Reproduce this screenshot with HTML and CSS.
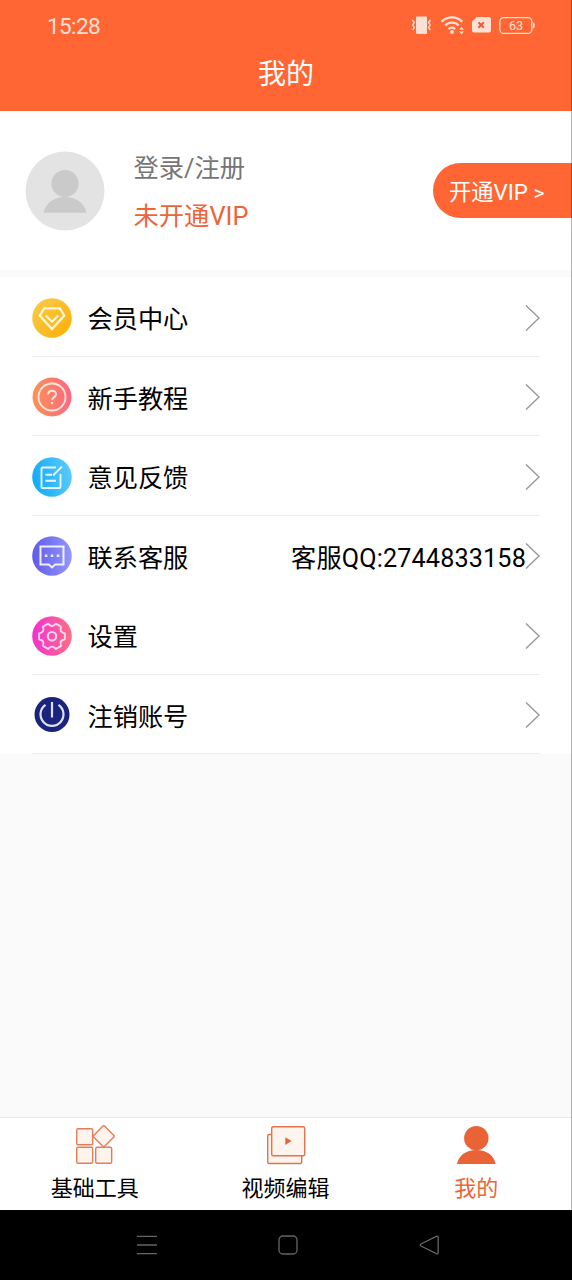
FILE: index.html
```html
<!DOCTYPE html>
<html lang="zh-CN">
<head>
<meta charset="utf-8">
<title>我的</title>
<link rel="stylesheet" href="styles.css">
</head>
<body>
<div class="app">
  <header class="header">
    <div class="status">
      <span class="time">15:28</span>
      <svg class="status-icons" width="126" height="24" viewBox="410 13 126 24" fill="#ffe0d4">
        <rect x="416" y="16.5" width="11" height="17.5" rx="1"/>
        <path d="M412.4 20l1.8 2.6-1.4 2.5 1.4 2.5-1.4 2.6M430.3 20l-1.6 2.6 1.4 2.5-1.4 2.5 1.6 2.6" fill="none" stroke="#ffe0d4" stroke-width="1.5"/>
        <path d="M441.6 21.6a14.5 14.5 0 0 1 20.6 0M445.3 25.5a9.4 9.4 0 0 1 13.4 0M448.6 29a4.8 4.8 0 0 1 6.6 0" fill="none" stroke="#ffe0d4" stroke-width="2.3"/>
        <circle cx="452" cy="32" r="1.9"/>
        <path d="M459.2 29.8l2.3-3 2.3 3zM459.2 31.4l2.3 3 2.3-3z"/>
        <path d="M476.5 17h12.5q2 0 2 2v11.5q0 2-2 2h-15q-2 0-2-2V21.500z"/>
        <path d="M478.400 22.300l5.400 5.400m0-5.400l-5.400 5.400" stroke="#e8603a" stroke-width="2"/>
        <rect x="499.800" y="17.600" width="32" height="15.800" rx="4" fill="none" stroke="#ffe0d4" stroke-width="1.300"/>
        <path d="M533 22.500q1.800 0 1.800 3t-1.800 3z"/>
        <text class="battery-level" x="516" y="30" text-anchor="middle">63</text>
      </svg>
    </div>
    <h1 class="title">我的</h1>
  </header>

  <section class="profile">
    <svg class="avatar" width="80" height="80" viewBox="0 0 80 80">
      <circle cx="40" cy="40" r="39.500" fill="#e3e3e3"/>
      <g fill="#cacaca"><circle cx="40" cy="32.500" r="13.600"/><path d="M18.500 61.800C20.500 52 29 46 40 46s19.500 6 21.500 15.800z"/></g>
    </svg>
    <div class="account">
      <span class="login">登录/注册</span>
      <span class="vip-state">未开通VIP</span>
    </div>
    <a class="vip-button">开通VIP <span class="more">&gt;</span></a>
  </section>

  <main class="menu">
    <div class="row">
      <svg class="badge" viewBox="0 0 40 40"><defs><linearGradient id="gold" x1="0" y1="0" x2="1" y2="1"><stop stop-color="#f9cc4e"/><stop offset="1" stop-color="#fdaf02"/></linearGradient></defs><circle cx="20" cy="20" r="19.800" fill="url(#gold)"/><path d="M12.200 10.300h15.600l4.500 7.300L20 31 7.700 17.600zM13.800 17.500l6.200 6.200 6.200-6.200" fill="none" stroke="#fff6dc" stroke-width="2.200"/></svg>
      <span class="label">会员中心</span>
      <svg class="chevron" viewBox="0 0 15 28"><path d="M1 1.500L14 14 1 26.500"/></svg>
    </div>
    <div class="row">
      <svg class="badge" viewBox="0 0 40 40"><defs><linearGradient id="coral"><stop stop-color="#fc9256"/><stop offset="1" stop-color="#fb6882"/></linearGradient></defs><circle cx="20" cy="20" r="19.500" fill="url(#coral)"/><circle cx="20" cy="20" r="13.500" fill="none" stroke="#ffe9df" stroke-width="1.800"/><path d="M16.200 17.500c0-5 7.800-5 7.800-.300 0 3-3.900 3-3.900 6" fill="none" stroke="#ffe9df" stroke-width="1.900"/><circle cx="20.100" cy="26" r="1.200" fill="#ffe9df"/></svg>
      <span class="label">新手教程</span>
      <svg class="chevron" viewBox="0 0 15 28"><path d="M1 1.500L14 14 1 26.500"/></svg>
    </div>
    <div class="row">
      <svg class="badge" viewBox="0 0 40 40"><defs><linearGradient id="sky" x1="0" y1=".6" x2="1" y2=".4"><stop stop-color="#10aafa"/><stop offset="1" stop-color="#5dcafb"/></linearGradient></defs><circle cx="20" cy="20" r="19.800" fill="url(#sky)"/><path d="M24 10.500H10.500q-1 0-1 1V30q0 1 1 1h17q1 0 1-1V17M13.500 17.800h6.500M13.500 23.800h10.500M21 18.500l9-9" fill="none" stroke="#e7f7ff" stroke-width="1.900"/></svg>
      <span class="label">意见反馈</span>
      <svg class="chevron" viewBox="0 0 15 28"><path d="M1 1.500L14 14 1 26.500"/></svg>
    </div>
    <div class="row row-plain">
      <svg class="badge" viewBox="0 0 40 40"><defs><linearGradient id="violet"><stop stop-color="#5f5bea"/><stop offset="1" stop-color="#9497f9"/></linearGradient></defs><circle cx="20" cy="20" r="19.800" fill="url(#violet)"/><path d="M8.500 10.500h23v18h-8.300L20 31.500l-3.200-3H8.500z" fill="none" stroke="#f0f0ff" stroke-width="2"/><path d="M12.800 18.500h2.500v2.500h-2.500zM18.800 18.500h2.500v2.500h-2.500zM24.800 18.500h2.500v2.500h-2.500z" fill="#f0f0ff"/></svg>
      <span class="label">联系客服</span>
      <span class="value">客服QQ:2744833158</span>
      <svg class="chevron" viewBox="0 0 15 28"><path d="M1 1.500L14 14 1 26.500"/></svg>
    </div>
    <div class="row">
      <svg class="badge" viewBox="0 0 40 40"><defs><linearGradient id="pink"><stop stop-color="#f430d2"/><stop offset="1" stop-color="#fd7082"/></linearGradient></defs><circle cx="20" cy="20" r="19.800" fill="url(#pink)"/><path d="M32.860 17.330V23.270Q26.930 24.300 29 29.950L23.860 32.920Q20 28.300 16.140 32.920L11 29.950Q13.070 24.300 7.140 23.270V17.330Q13.070 16.300 11 10.650L16.140 7.680Q20 12.300 23.860 7.680L29 10.650Q26.930 16.300 32.860 17.330z" fill="none" stroke="#ffdcf4" stroke-width="1.900" stroke-linejoin="round"/><circle cx="20" cy="20.300" r="4.200" fill="none" stroke="#ffdcf4" stroke-width="2"/></svg>
      <span class="label">设置</span>
      <svg class="chevron" viewBox="0 0 15 28"><path d="M1 1.500L14 14 1 26.500"/></svg>
    </div>
    <div class="row">
      <svg class="badge" viewBox="0 0 40 40"><circle cx="20" cy="19.500" r="17.500" fill="#1a237e"/><path d="M13.500 9.900a11.500 11.500 0 1 0 13 0M20 7v15.500" fill="none" stroke="#dfe2f4" stroke-width="2.200"/></svg>
      <span class="label">注销账号</span>
      <svg class="chevron" viewBox="0 0 15 28"><path d="M1 1.500L14 14 1 26.500"/></svg>
    </div>
  </main>

  <nav class="tabs">
    <a class="tab">
      <svg width="40" height="40" viewBox="0 0 40 40" fill="#fef4ee" stroke="#e47d58" stroke-width="1.400"><rect x="1.700" y="3.700" width="16" height="16" rx="1.500"/><rect x="1.700" y="22.300" width="16" height="16" rx="1.500"/><rect x="20.700" y="22.300" width="16" height="16" rx="1.500"/><rect x="21" y="3.400" width="15.500" height="15.500" rx="1.500" transform="rotate(45 28.700 11.200)"/></svg>
      <span>基础工具</span>
    </a>
    <a class="tab">
      <svg width="40" height="40" viewBox="0 0 40 40" fill="#fef4ee" stroke="#e2734d" stroke-width="1.400"><rect x="1.700" y="9.500" width="34" height="29" rx="1.500"/><rect x="5.700" y="1.700" width="33" height="29" rx="1.500"/><path d="M19.300 12.300v7.600l6.200-3.800z" fill="#e2673c" stroke="none"/></svg>
      <span>视频编辑</span>
    </a>
    <a class="tab tab-active">
      <svg width="40" height="40" viewBox="0 0 40 40" fill="#e96337"><circle cx="20.300" cy="13.200" r="12.200"/><path d="M1 39c1.500-8.500 9-14 19.300-14S38.100 30.500 39.600 39z"/></svg>
      <span>我的</span>
    </a>
  </nav>

  <footer class="system-nav">
    <svg width="22" height="22" viewBox="0 0 22 22"><path d="M1 2.300h20M1 11h20M1 19.700h20"/></svg>
    <svg width="22" height="22" viewBox="0 0 22 22"><rect x="2" y="2" width="18" height="18" rx="4"/></svg>
    <svg width="22" height="22" viewBox="0 0 22 22"><path d="M18.300 2.300L3 10q-1.600 1 0 2l15.300 7.700q1.900.500 1.900-1.200v-15q0-1.700-1.900-1.200z"/></svg>
  </footer>
  <div class="edge"></div>
</div>
</body>
</html>
```
FILE: styles.css
```css
* { box-sizing: border-box; }

body {
  margin: 0;
  font-family: Roboto, "Noto Sans CJK SC", sans-serif;
  font-weight: 400;
  color: #000;
}

svg { display: block; flex: none; }

.app {
  position: relative;
  display: flex;
  flex-direction: column;
  width: 572px;
  height: 1280px;
  background: #fafafa;
  overflow: hidden;
}

.header {
  height: 111px;
  background: #ff6634;
  color: #fff;
}

.status {
  display: flex;
  justify-content: space-between;
  align-items: center;
  height: 50px;
  padding: 0 36px 0 47px;
}

.time { padding-top: 1px; font-size: 22.500px; letter-spacing: -0.600px; color: #ffe0d4; }
.battery-level { font: 400 12.500px Roboto, sans-serif; }

.title {
  margin: 0;
  padding-top: 3px;
  font-size: 28px;
  font-weight: 400;
  line-height: 44px;
  text-align: center;
}

.profile {
  display: flex;
  align-items: flex-start;
  height: 159px;
  padding: 39.500px 0 0 25px;
  background: #fff;
}

.account {
  display: flex;
  flex-direction: column;
  flex: 1;
  margin-top: -5.500px;
  margin-left: 28.500px;
  font-size: 25.300px;
  line-height: 48px;
}

.login { color: #757575; }
.vip-state { color: #ec6539; }

.vip-button {
  width: 139px;
  height: 55px;
  margin-top: 12.500px;
  padding: 1px 0 0 16px;
  border-radius: 28px 0 0 28px;
  background: #ff6634;
  color: #fff;
  font-size: 22.300px;
  line-height: 56px;
  white-space: nowrap;
}

.more { font-size: 21px; }

.menu {
  margin-top: 7px;
  padding: 0 32px;
  background: #fff;
}

.row {
  display: flex;
  align-items: center;
  height: 79.500px;
  padding-top: 2.500px;
  border-bottom: 1.500px solid #ececec;
}

.row-plain { border-bottom-color: transparent; }
.badge { width: 40px; height: 40px; }
.label { margin-left: 15.500px; font-size: 25.200px; }
.value { margin-left: auto; font-size: 25.200px; letter-spacing: 0.150px; }
.row > span { margin-top: -1px; }
.chevron { width: 15px; height: 28px; margin-left: auto; fill: none; stroke: #999; stroke-width: 1.400; }
.value + .chevron { margin-left: -1px; }

.tabs {
  display: flex;
  height: 93px;
  margin-top: auto;
  border-top: 1px solid #e8e8e8;
  background: #fff;
}

.tab {
  display: flex;
  flex-direction: column;
  flex: 1;
  align-items: center;
  padding: 7px 1px 0 0;
  font-size: 22px;
  line-height: 48px;
}

.tab-active { color: #ec6539; }

.system-nav {
  display: flex;
  justify-content: space-between;
  align-items: center;
  height: 70px;
  padding: 0 132px 0 136px;
  background: #000;
}

.system-nav svg { fill: none; stroke: #666; stroke-width: 1.300; }

.edge {
  position: absolute;
  top: 0;
  right: 0;
  width: 1px;
  height: 1210px;
  background: rgba(0, 0, 0, 0.300);
}
```
